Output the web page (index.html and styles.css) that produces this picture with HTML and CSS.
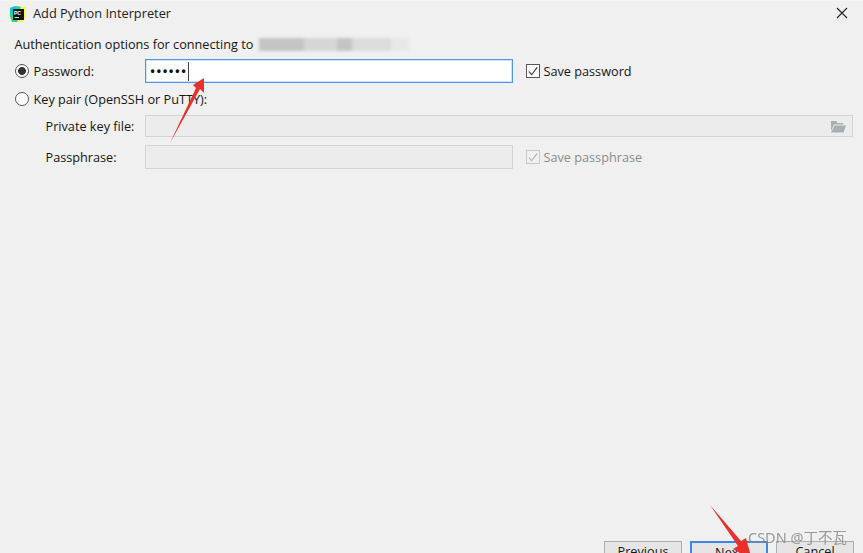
FILE: index.html
```html
<!DOCTYPE html>
<html lang="en">
<head>
<meta charset="utf-8">
<title>Add Python Interpreter</title>
<link rel="stylesheet" href="styles.css">
</head>
<body>
<div class="dialog">
  <header class="titlebar">
    <svg class="app-icon" width="18" height="18" viewBox="0 0 18 18">
      <path d="M1 3 L8 1 L17 3 L17 10 L13 17 L3 17 L1 11 Z" fill="#21d789"/>
      <path d="M12 1 L17 3 L17 12 L13 17 L8 17 Z" fill="#fcf84a"/>
      <path d="M1 3 L6 1 L9 4 L3 9 Z" fill="#07c3f2"/>
      <rect x="4" y="4" width="11" height="11" fill="#111"/>
      <rect x="5.5" y="12" width="4.5" height="1" fill="#ddd"/>
      <text x="5" y="9.5" class="app-icon-text">PC</text>
    </svg>
    <span class="title">Add Python Interpreter</span>
    <svg class="close" width="12" height="12" viewBox="0 0 12 12"><path d="M1 1 L11 11 M11 1 L1 11" stroke="#222" stroke-width="1.1" fill="none"/></svg>
  </header>

  <main class="content">
    <div class="intro">
      <span>Authentication options for connecting to</span>
      <span class="redacted"></span>
    </div>

    <div class="row row-password">
      <label class="radio-label"><span class="radio radio-on"></span>Password:</label>
      <div class="input input-focus"><span class="dots">••••••</span><span class="caret"></span></div>
      <label class="check-label"><span class="check"><svg width="13" height="13" viewBox="0 0 13 13"><path d="M2 6.5 L5 10 L11 2" stroke="#333" stroke-width="1.2" fill="none"/></svg></span>Save password</label>
    </div>

    <div class="row row-keypair">
      <label class="radio-label"><span class="radio"></span>Key pair (OpenSSH or PuTTY):</label>
    </div>

    <div class="row row-key">
      <span class="sub-label">Private key file:</span>
      <div class="input input-disabled input-wide">
        <svg class="folder" width="16" height="13" viewBox="0 0 16 13"><path d="M1 1 H6 L7.5 3 H13 V4.500 H4 L1 11 Z" fill="#a9aeb1"/><path d="M4.500 5.500 H16 L13.500 12.500 H1 Z" fill="#a9aeb1"/></svg>
      </div>
    </div>

    <div class="row row-phrase">
      <span class="sub-label">Passphrase:</span>
      <div class="input input-disabled"></div>
      <label class="check-label check-disabled"><span class="check"><svg width="13" height="13" viewBox="0 0 13 13"><path d="M2 6.500 L5 10 L11 2" stroke="#b4b4b4" stroke-width="1.2" fill="none"/></svg></span>Save passphrase</label>
    </div>
  </main>

  <footer class="buttons">
    <button class="btn btn-prev">Previous</button>
    <button class="btn btn-next">Next</button>
    <button class="btn btn-cancel">Cancel</button>
  </footer>
</div>

<svg class="annotations" width="863" height="553" viewBox="0 0 863 553">
  <path d="M170 143 L196 88 L193 85 L204 78 L204 93 L200 89 Z" fill="#e8302c"/>
  <path d="M710 505 L741 541 L746 538 L752 560 L733 549 L738 546 Z" fill="#e8302c"/>
</svg>
<span class="watermark">CSDN @丁不瓦</span>
</body>
</html>
```
FILE: styles.css
```css
* { box-sizing: border-box; }
html, body { margin: 0; height: 553px; overflow: hidden; }
body {
  position: relative;
  background: #f0f0f0;
  color: #161616;
  font: 12.7px/18px "Open Sans", "Noto Sans", sans-serif;
}
.dialog {
  height: 553px;
  display: flex;
  flex-direction: column;
  padding-left: 2px;
  border-top: 1px solid #f4f4f4;
}
.titlebar {
  height: 23px;
  display: flex;
  align-items: center;
  padding: 0 15px 0 7px;
  flex: none;
}
.app-icon { flex: none; margin-top: 2px; }
.app-icon-text { font: bold 5px "Liberation Sans", sans-serif; fill: #fff; }
.title { margin-left: 6px; font-size: 12.8px; color: #222; }
.close { margin-left: auto; }
.content {
  flex: 1;
  padding: 11px 10px 0 12.500px;
}
.intro { height: 18px; display: flex; align-items: center; white-space: nowrap; }
.redacted {
  width: 150px;
  height: 13px;
  margin-left: 6px;
  background: linear-gradient(90deg, #c4c4c4 0 30%, #d6d6d6 30% 52%, #c4c4c4 52% 62%, #dcdcdc 62% 88%, #e8e8e8 88%);
  filter: blur(1.500px);
}
.row { display: flex; align-items: center; white-space: nowrap; }
.row-password { margin-top: 6px; height: 24px; }
.row-keypair { margin-top: 4px; height: 24px; }
.row-key { margin-top: 4px; height: 22px; }
.row-phrase { margin-top: 8px; height: 24px; }
.radio-label { display: flex; align-items: center; width: 130px; flex: none; }
.row-keypair .radio-label { width: auto; }
.radio {
  width: 14px;
  height: 14px;
  margin-right: 5px;
  border: 1px solid #555;
  border-radius: 50%;
  background: #fff;
  flex: none;
}
.radio-on { background: radial-gradient(circle, #333 0 3.600px, #fafafa 4.200px); }
.sub-label { width: 99px; margin-left: 31px; flex: none; }
.input {
  width: 368px;
  height: 100%;
  flex: none;
  display: flex;
  align-items: center;
  border: 1px solid #c8c8c8;
}
.input-focus {
  background: #fff;
  border-color: #4d97ea;
  padding-left: 5px;
  box-shadow: inset 0 0 0 1px #cfe3f9;
}
.input-disabled { background: #ececec; border: 1px solid #d4d4d4; }
.input-wide { width: 708px; justify-content: flex-end; padding-right: 6px; }
.dots { font: bold 12px/16px "Liberation Sans", sans-serif; letter-spacing: 2px; color: #111; }
.caret { width: 1px; height: 19px; background: #444; }
.check-label { display: flex; align-items: center; margin-left: 13px; }
.check {
  width: 14px;
  height: 14px;
  margin-right: 4px;
  border: 1px solid #555;
  background: #fafafa;
  display: flex;
  align-items: center;
  justify-content: center;
}
.check-disabled { color: #8c8c8c; }
.check-disabled .check { border-color: #c8c8c8; background: #f0f0f0; }
.buttons {
  flex: none;
  display: flex;
  justify-content: flex-end;
  gap: 8px;
  padding-right: 9px;
  height: 12px;
}
.btn {
  width: 78px;
  height: 20px;
  padding: 0;
  background: #e5e5e5;
  border: 1px solid #adadad;
  font: inherit;
  color: #161616;
}
.btn-next { border: 2px solid #3f86e6; }
.annotations { position: absolute; left: 0; top: 0; pointer-events: none; }
.watermark {
  position: absolute;
  left: 748px;
  top: 528px;
  font: 14.5px/18px "Noto Sans", "Noto Sans CJK SC", sans-serif;
  color: #8a8a8a;
  opacity: 0.85;
}
```
